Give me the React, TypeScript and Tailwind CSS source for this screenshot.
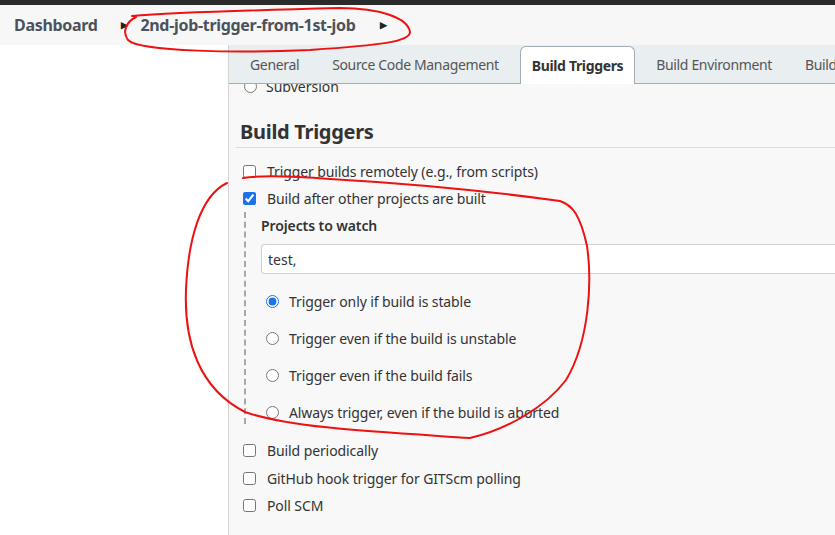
import React from "react";

const FONT = { fontFamily: '"Noto Sans", "Open Sans", sans-serif' };

function Check({ label, checked = false }: { label: string; checked?: boolean }) {
  return (
    <label className="flex h-[27px] items-center pl-[14px] text-[14px] tracking-[-0.1px] text-[#333]">
      <input
        type="checkbox"
        defaultChecked={checked}
        className="m-0 h-[13px] w-[13px] accent-[#1a73e8]"
      />
      <span className="ml-[11px]">{label}</span>
    </label>
  );
}

function Radio({ label, checked = false }: { label: string; checked?: boolean }) {
  return (
    <label className="flex h-[24px] items-center pl-[5px] text-[14px] tracking-[-0.1px] text-[#333]">
      <input
        type="radio"
        name="trigger"
        defaultChecked={checked}
        className="m-0 h-[13px] w-[13px] accent-[#1a73e8]"
      />
      <span className="ml-[10px]">{label}</span>
    </label>
  );
}

export default function App() {
  const tabs = ["General", "Source Code Management", "Build Triggers", "Build Environment", "Build"];
  return (
    <div className="relative h-[535px] w-[835px] overflow-hidden bg-white" style={FONT}>
      {/* top bar */}
      <div className="h-[5px] bg-[#2b2b2b]" />

      {/* breadcrumb */}
      <div className="flex h-[40px] items-center bg-[#f7f7f7] pl-[14px] text-[16px] font-bold tracking-[-0.3px] text-[#4b525c]">
        <span>Dashboard</span>
        <span className="ml-[23px] mr-[13px] text-[9px] text-[#222]">▶</span>
        <span>2nd-job-trigger-from-1st-job</span>
        <span className="ml-[24px] text-[9px] text-[#222]">▶</span>
      </div>

      <div className="flex h-[490px]">
        {/* side panel */}
        <div className="w-[229px] shrink-0 border-r border-[#d4d4d4] bg-white" />

        {/* main */}
        <div className="flex min-w-0 flex-1 flex-col bg-[#f8f8f8]">
          {/* tabs */}
          <div className="flex h-[39px] shrink-0 items-end gap-[9px] whitespace-nowrap border-b border-[#a3adb4] bg-[#e9eef1] pl-[9px] text-[14px] tracking-[-0.35px] text-[#555]">
            {tabs.map((t) =>
              t === "Build Triggers" ? (
                <div
                  key={t}
                  className="-mb-px flex h-[38px] items-center rounded-t-[6px] border border-b-0 border-[#a3adb4] bg-white px-[11px] font-bold text-[#333]"
                >
                  {t}
                </div>
              ) : (
                <div key={t} className="flex h-[37px] items-center px-[12px]">
                  {t}
                </div>
              )
            )}
          </div>

          {/* scrolled content */}
          <div className="min-h-0 flex-1 overflow-hidden">
            <div className="-mt-[6px] flex h-[16px] items-center pl-[15px] text-[14px] text-[#333]">
              <input type="radio" name="scm" className="m-0 h-[13px] w-[13px]" />
              <span className="ml-[9px]">Subversion</span>
            </div>

            <div className="ml-[7px] mt-[24px] flex h-[30px] items-start border-b border-[#dcdcdc] pl-[4px] text-[20px] font-bold leading-[28px] tracking-[-0.3px] text-[#333]">
              Build Triggers
            </div>

            <div className="mt-[10px]">
              <Check label="Trigger builds remotely (e.g., from scripts)" />
              <Check label="Build after other projects are built" checked />

              <div className="ml-[15px] h-[212px] border-l-2 border-dashed border-[#a8a8a8] pl-[15px]">
                <div className="flex h-[27px] items-center text-[14px] font-semibold tracking-[-0.1px] text-[#333]">
                  Projects to watch
                </div>
                <div className="mt-[5px] flex h-[30px] items-center rounded-l-[4px] border border-r-0 border-[#cfcfcf] bg-white pl-[6px] text-[14px] text-[#333]">
                  test,
                </div>
                <div className="mt-[15px] flex flex-col gap-[13px]">
                  <Radio label="Trigger only if build is stable" checked />
                  <Radio label="Trigger even if the build is unstable" />
                  <Radio label="Trigger even if the build fails" />
                  <Radio label="Always trigger, even if the build is aborted" />
                </div>
              </div>

              <div className="mt-[13px] flex flex-col [&>label]:h-[27.5px]">
                <Check label="Build periodically" />
                <Check label="GitHub hook trigger for GITScm polling" />
                <Check label="Poll SCM" />
              </div>
            </div>
          </div>
        </div>
      </div>

      {/* red hand-drawn annotations */}
      <svg
        className="pointer-events-none absolute left-0 top-0"
        width="835"
        height="535"
        viewBox="0 0 835 535"
        fill="none"
        stroke="#ee1111"
        strokeWidth="2"
        strokeLinecap="round"
        strokeLinejoin="round"
      >
        <path d="M132 16 C 180 12, 260 10, 340 8 C 380 8, 408 18, 410 32 C 410 42, 380 45, 310 50 C 240 53, 140 52, 128 40 C 122 32, 126 22, 136 17" />
        <path d="M227 183 C 200 196, 188 240, 186 290 C 184 340, 198 388, 245 412 C 290 428, 380 432, 470 438 C 505 430, 545 408, 566 380 C 590 340, 592 280, 587 246 C 580 214, 572 205, 560 201 C 480 190, 400 183, 330 179 C 290 176, 262 175, 243 178" />
      </svg>
    </div>
  );
}
